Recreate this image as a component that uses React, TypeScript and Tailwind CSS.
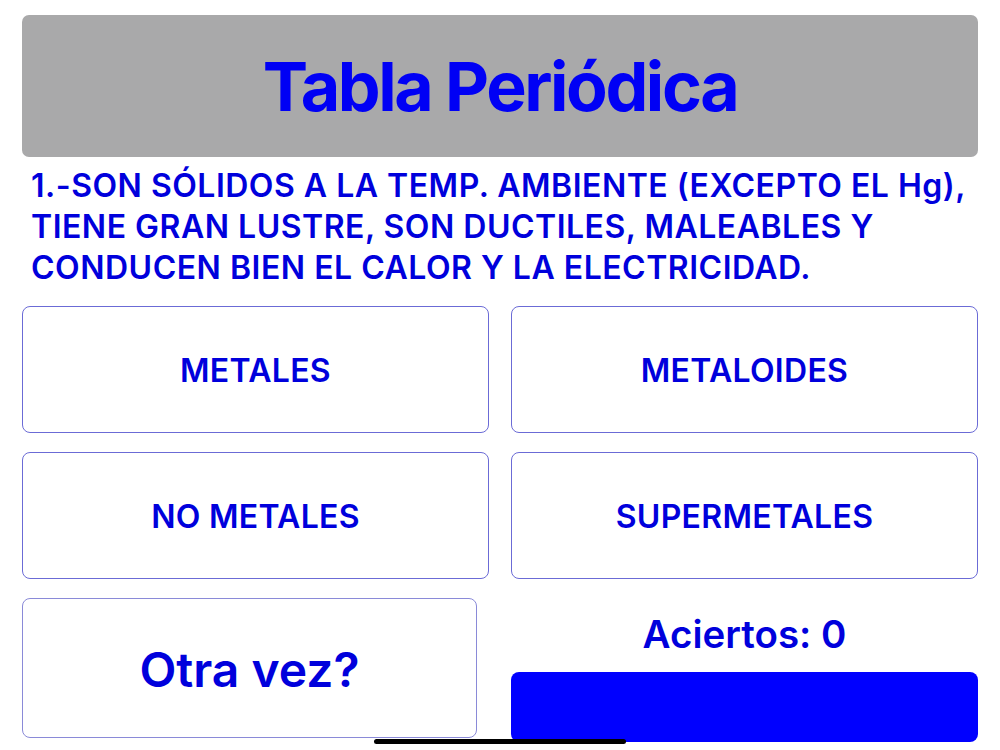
import React, { useState } from 'react';

const OPTIONS = ['METALES', 'METALOIDES', 'NO METALES', 'SUPERMETALES'];

const font = { fontFamily: 'Inter, "Noto Sans", sans-serif' };

const App: React.FC = () => {
  const [aciertos, setAciertos] = useState(0);

  return (
    <div className="relative h-[750px] w-[1000px] overflow-hidden bg-white px-[22px] pt-[15px]" style={font}>
      {/* Header */}
      <div className="flex h-[142px] items-center justify-center rounded-[7px] bg-[#a9a9aa]">
        <h1 className="text-[68px] font-bold leading-none tracking-[-2.4px] text-[#0000f5]">Tabla Periódica</h1>
      </div>

      {/* Question */}
      <p className="mt-[8px] h-[141px] pl-[9px] text-[32px] font-semibold leading-[41px] tracking-[0.5px] text-[#0000dc]">
        1.-SON SÓLIDOS A LA TEMP. AMBIENTE (EXCEPTO EL Hg), TIENE GRAN LUSTRE, SON DUCTILES, MALEABLES Y CONDUCEN BIEN EL CALOR Y LA ELECTRICIDAD.
      </p>

      {/* Answers */}
      <div className="grid grid-cols-2 gap-x-[22px] gap-y-[19px]">
        {OPTIONS.map((opt) => (
          <button
            key={opt}
            onClick={() => opt === 'METALES' && setAciertos(aciertos + 1)}
            className="flex h-[127px] items-center justify-center rounded-[8px] border border-[#6b6bd6] bg-white pt-[3px] text-[32px] font-semibold tracking-[0.3px] text-[#0000dc]"
          >
            {opt}
          </button>
        ))}
      </div>

      {/* Bottom row */}
      <div className="mt-[19px] grid grid-cols-2 gap-x-[22px]">
        <button
          onClick={() => setAciertos(0)}
          className="mr-[12px] flex h-[140px] items-center justify-center rounded-[8px] border border-[#8a8ad8] bg-white pt-[3px] text-[48px] font-semibold text-[#0000dc]"
        >
          Otra vez?
        </button>
        <div className="flex flex-col">
          <div className="flex h-[74px] items-center justify-center text-[38.5px] font-semibold text-[#0000dc]">
            Aciertos: {aciertos}
          </div>
          <div className="h-[70px] rounded-[8px] bg-[#0000ff]" />
        </div>
      </div>

      {/* Home indicator */}
      <div className="absolute bottom-[6px] left-[374px] h-[5px] w-[252px] rounded-full bg-black" />
    </div>
  );
};

export default App;
